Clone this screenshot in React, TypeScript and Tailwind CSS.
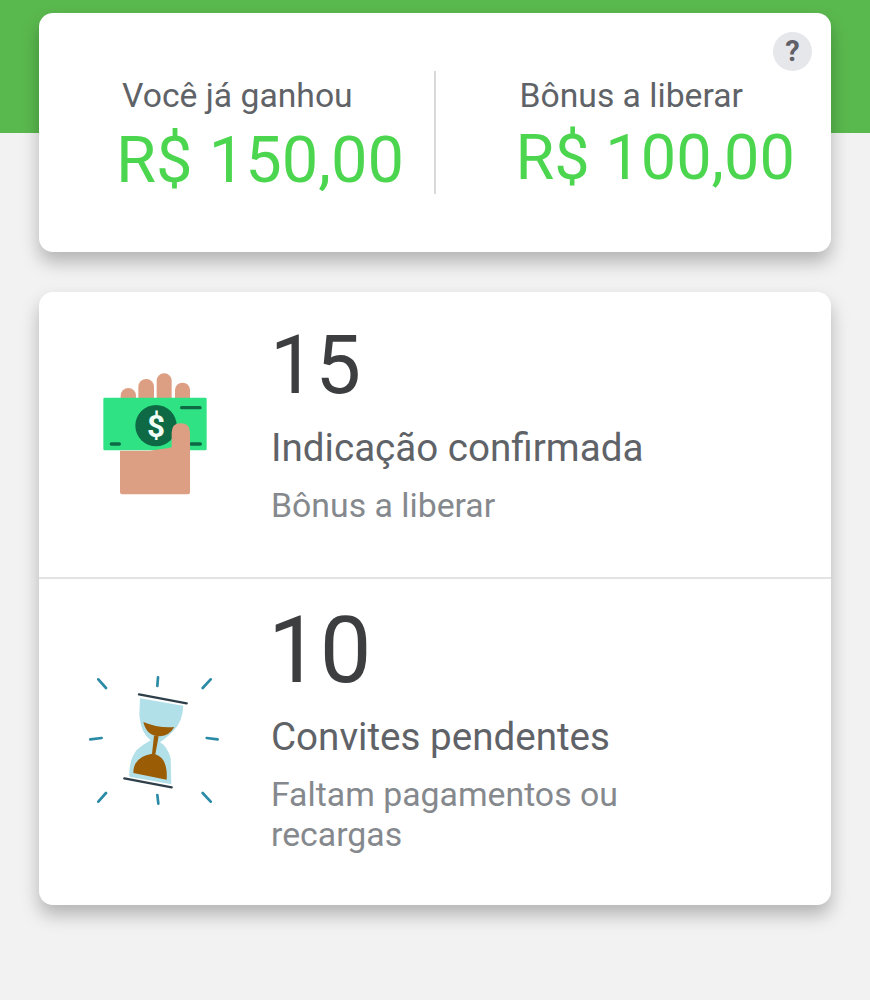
const font = "font-['Roboto',sans-serif]";

const MoneyIcon = () => (
  <svg viewBox="0 0 450 450" className="w-[150px] h-[150px] shrink-0">
    <rect x="122" y="84" width="46" height="80" rx="23" fill="#dd9f84" />
    <rect x="175" y="57" width="47" height="100" rx="23" fill="#dd9f84" />
    <rect x="230" y="40" width="45" height="110" rx="22" fill="#dd9f84" />
    <rect x="285" y="68" width="45" height="90" rx="22" fill="#dd9f84" />
    <rect x="70" y="113" width="310" height="158" rx="4" fill="#2fe384" />
    <circle cx="228" cy="197" r="62" fill="#0d6a45" />
    <text x="228" y="230" textAnchor="middle" fontFamily="Roboto, sans-serif" fontWeight="700" fontSize="94" fill="#f2fff6">$</text>
    <path d="M305 143H360M94 252H118M333 252H361" stroke="#0d6a45" strokeWidth="10" strokeLinecap="round" />
    <path d="M120 272 L210 272 Q250 268 275 262 L275 218 Q275 190 302 190 Q330 190 330 218 L330 397 Q330 403 324 403 L126 403 Q120 403 120 397 Z" fill="#dd9f84" />
  </svg>
);

const HourglassIcon = () => (
  <svg viewBox="0 0 450 450" className="w-[150px] h-[150px] shrink-0">
    <path d="M180 100 L310 122 Q308 170 280 198 Q258 220 240 232 Q262 244 272 280 L274 358 L148 335 Q146 285 170 255 Q190 238 212 226 Q182 205 178 150 Z" fill="#b2e0e9" />
    <path d="M190 171 Q235 190 283 186 Q268 212 240 214 Q200 214 190 171 Z" fill="#9b5c06" />
    <path d="M222 212 L236 214 L226 268 Q264 280 260 344 L160 324 Q160 275 216 266 Z" fill="#9b5c06" />
    <path d="M177 88 L320 115 M133 340 L275 367" stroke="#2f3f4a" strokeWidth="7" strokeLinecap="round" />
    <path d="M55 43 L78 69 M234 37 L232 63 M392 43 L368 69 M31 223 L65 219 M380 219 L413 223 M55 410 L78 384 M232 390 L235 416 M368 384 L392 410" stroke="#2b8aa6" strokeWidth="8" strokeLinecap="round" />
  </svg>
);

const Total = ({ label, value, className, valueClass }: { label: string; value: string; className: string; valueClass: string }) => (
  <div className={`flex-1 flex flex-col ${className}`}>
    <span className="text-[33.7px] leading-[40px] text-[#5f6368]">{label}</span>
    <span className={`text-[#4cd64f] whitespace-nowrap ${valueClass}`}>{value}</span>
  </div>
);

const Row = ({
  icon,
  count,
  title,
  subtitle,
  className,
  countClass,
  textClass,
}: {
  icon: React.ReactNode;
  count: string;
  title: string;
  subtitle: React.ReactNode;
  className: string;
  countClass: string;
  textClass: string;
}) => (
  <div className={`flex items-center pl-[41px] gap-[41px] ${className}`}>
    {icon}
    <div className={`flex flex-col ${textClass}`}>
      <span className={`text-[#3c3e40] ${countClass}`}>{count}</span>
      <span className="text-[38.6px] leading-[44px] text-[#5f6368]">{title}</span>
      <span className="text-[33.8px] leading-[40px] text-[#85898d] mt-[16px]">{subtitle}</span>
    </div>
  </div>
);

export default function App() {
  return (
    <div className={`w-[870px] h-[1000px] overflow-hidden bg-[#f2f2f2] ${font}`}>
      <div className="h-[133px] bg-[#5ab94e]" />
      <div className="-mt-[120px] px-[39px] flex flex-col w-[870px] gap-[40px]">
        <div className="relative h-[239px] w-[792px] rounded-[14px] bg-white shadow-[0_10px_18px_rgba(0,0,0,0.26)] flex items-center">
          <button className="absolute right-[19px] top-[19px] w-[39px] h-[39px] rounded-full bg-[#e6e7eb] text-[#5f6068] font-bold text-[29px] leading-none flex items-center justify-center">
            ?
          </button>
          <Total
            label="Você já ganhou"
            value="R$ 150,00"
            className="pl-[83px] pt-[9px]"
            valueClass="text-[65px] leading-[76px] -ml-[6px] mt-[6px]"
          />
          <div className="w-[2px] h-[123px] bg-[#d9d9d9]" />
          <Total
            label="Bônus a liberar"
            value="R$ 100,00"
            className="pl-[84px] pt-[7px]"
            valueClass="text-[63px] leading-[76px] -ml-1 mt-[4px]"
          />
        </div>
        <div className="w-[792px] h-[613px] rounded-[14px] bg-white shadow-[0_10px_18px_rgba(0,0,0,0.26)] flex flex-col">
          <Row
            icon={<MoneyIcon />}
            count="15"
            title="Indicação confirmada"
            subtitle="Bônus a liberar"
            countClass="text-[81px] leading-[84px] -ml-[1px] mb-[18px]"
            textClass="pb-[20px]"
            className="h-[287px] border-b-2 border-[#e3e3e3]"
          />
          <Row
            icon={<HourglassIcon />}
            count="10"
            title="Convites pendentes"
            subtitle={
              <>
                Faltam pagamentos ou
                <br />
                recargas
              </>
            }
            countClass="text-[92px] leading-[96px] -ml-[3px] mb-[16px]"
            textClass="pb-[23px]"
            className="flex-1 pb-[4px]"
          />
        </div>
      </div>
    </div>
  );
}
